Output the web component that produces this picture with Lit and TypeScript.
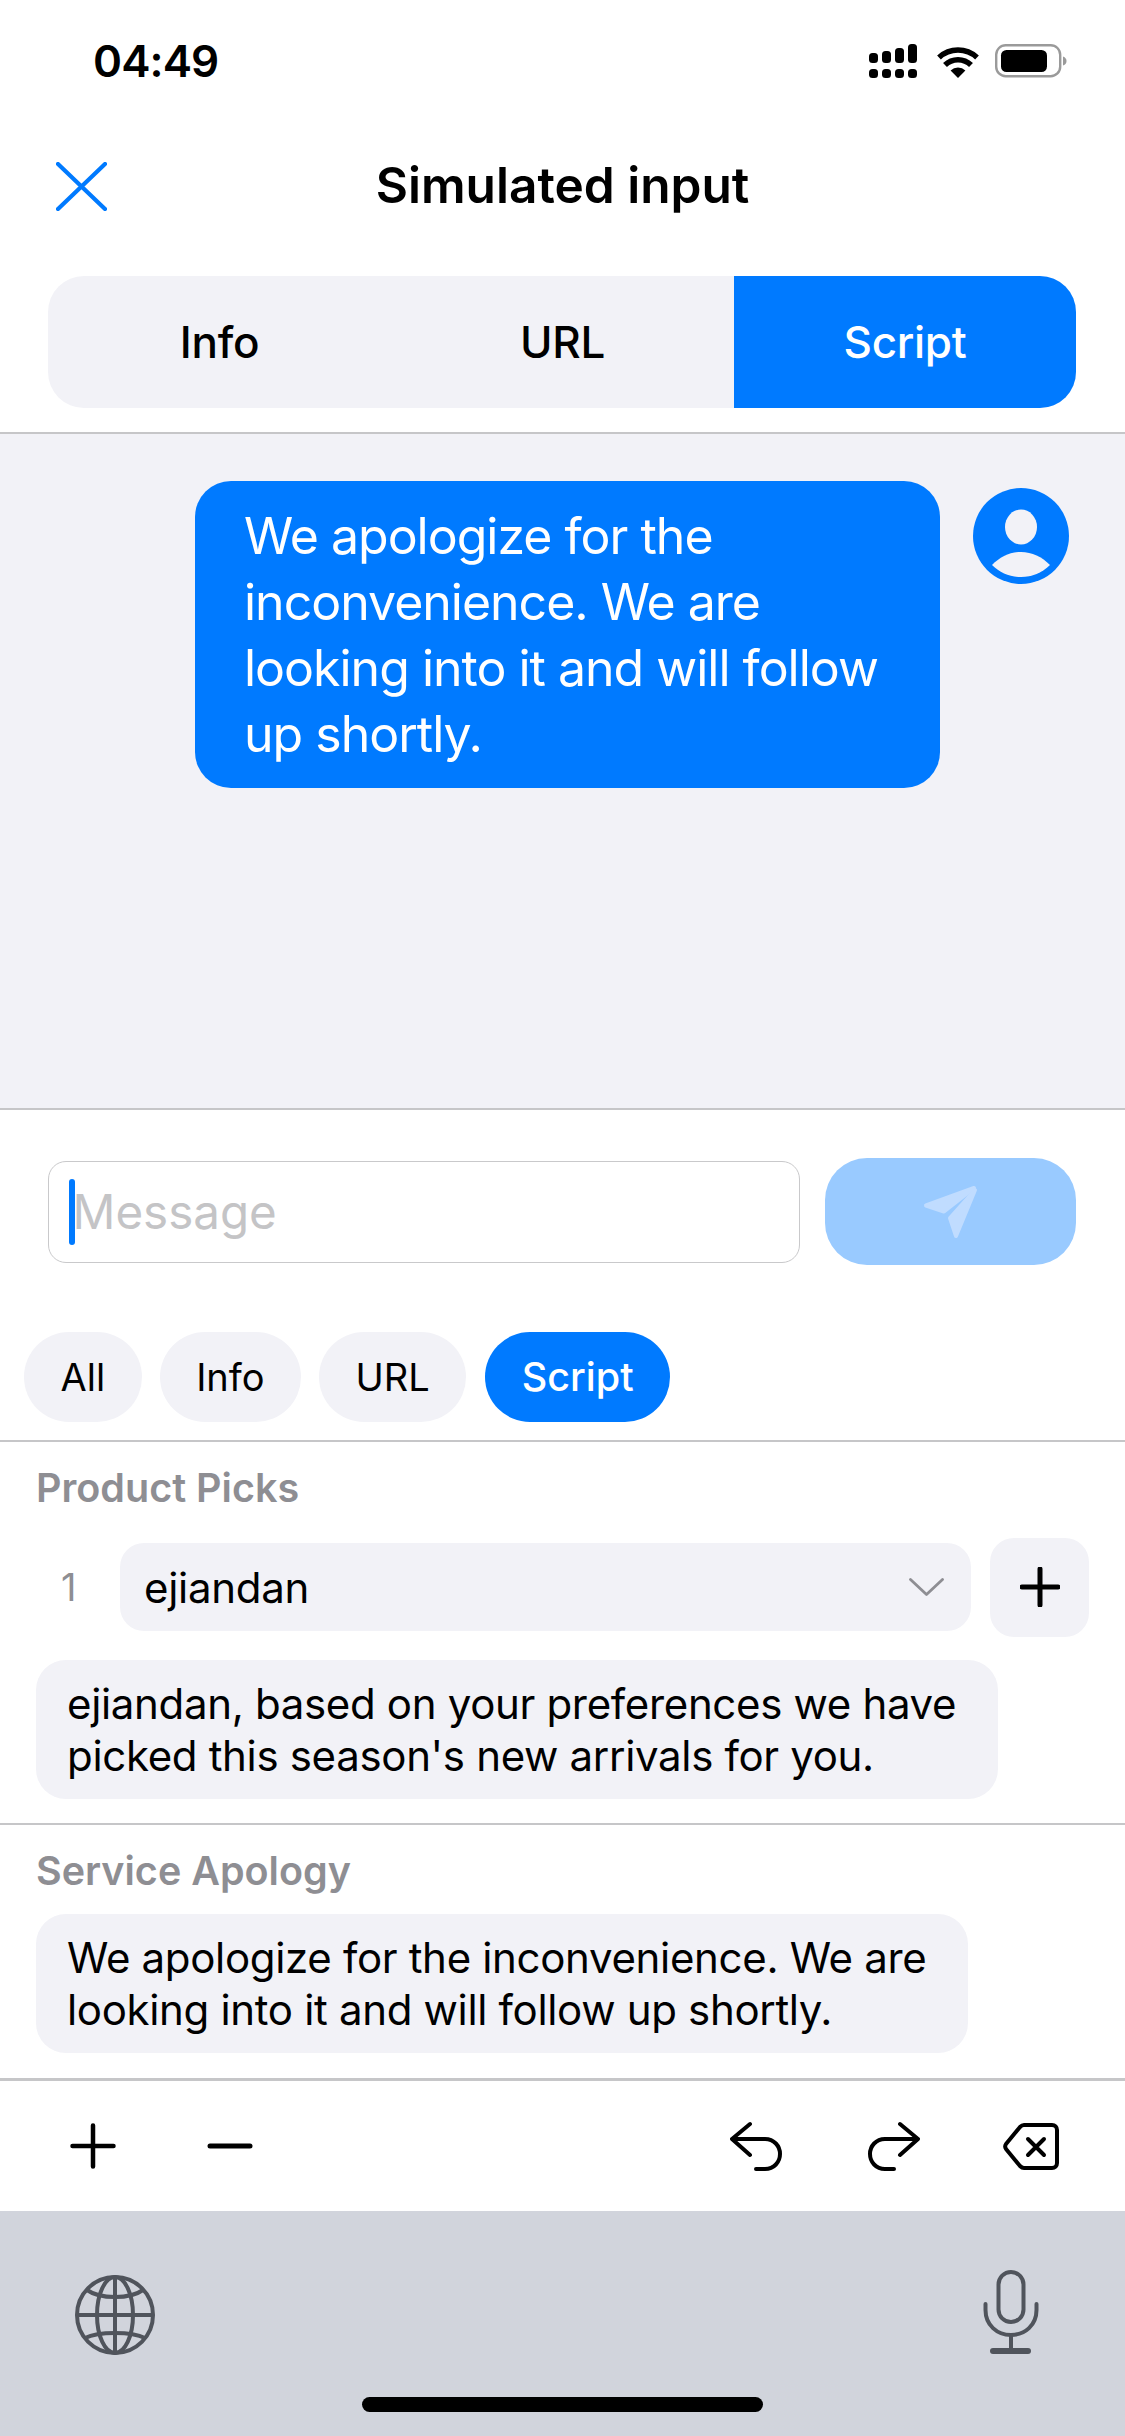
import {LitElement, html, css, svg} from 'lit';
import {customElement} from 'lit/decorators.js';

const signalIcon = svg`<svg class="signal" width="52" height="34" viewBox="0 0 52 34">
  <g fill="#000">
    <rect x="0" y="9" width="9" height="10" rx="3.5"/><rect x="13" y="7" width="9" height="12" rx="3.5"/>
    <rect x="26" y="4" width="9" height="15" rx="3.5"/><rect x="39" y="0" width="9" height="19" rx="3.5"/>
    <rect x="0" y="25" width="9" height="9" rx="3.5"/><rect x="13" y="25" width="9" height="9" rx="3.5"/>
    <rect x="26" y="25" width="9" height="9" rx="3.5"/><rect x="39" y="25" width="9" height="9" rx="3.5"/>
  </g></svg>`;

const wifiIcon = svg`<svg width="42" height="33" viewBox="0 0 42 33">
  <path d="M21 33L13.6 25.6A10.5 10.5 0 0 1 28.4 25.6Z" fill="#000"/>
  <path d="M8 20A18.5 18.5 0 0 1 34 20" fill="none" stroke="#000" stroke-width="5.5"/>
  <path d="M2 12.5A28 28 0 0 1 40 12.5" fill="none" stroke="#000" stroke-width="5.5"/>
</svg>`;

const batteryIcon = svg`<svg width="72" height="34" viewBox="0 0 72 34">
  <rect x="1.2" y="1.2" width="64" height="31" rx="9.5" fill="none" stroke="#9a9a9a" stroke-width="2.4"/>
  <rect x="6" y="6" width="46" height="22" rx="5.5" fill="#000"/>
  <path d="M68 12.5C70.5 13.5 71.5 15 71.5 17C71.5 19 70.5 20.5 68 21.5Z" fill="#9a9a9a"/>
</svg>`;

const closeIcon = svg`<svg width="51" height="49" viewBox="0 0 51 49">
  <path d="M2 2L49 47M49 2L2 47" fill="none" stroke="#007aff" stroke-width="4.2" stroke-linecap="round"/>
</svg>`;

const avatarIcon = svg`<svg width="96" height="96" viewBox="0 0 96 96">
  <circle cx="48" cy="48" r="48" fill="#007aff"/>
  <ellipse cx="48" cy="39" rx="16" ry="17.5" fill="#f2f2f7"/>
  <path d="M19 77C27 69 37 64 48 64C59 64 69 69 77 77C69 85 59 89 48 89C37 89 27 85 19 77Z" fill="#f2f2f7"/>
</svg>`;

const sendIcon = svg`<svg width="60" height="58" viewBox="0 0 60 58">
  <g fill="#c0dcff" stroke="#c0dcff" stroke-width="4" stroke-linejoin="round">
    <path d="M53 5L5 22.5L23 28.5Z"/>
    <path d="M54 7L29 35L35 53Z"/>
  </g></svg>`;

const chevronIcon = svg`<svg width="35" height="18" viewBox="0 0 35 18">
  <path d="M1.5 1.5L17.5 16.5L33.5 1.5" fill="none" stroke="#8e8e93" stroke-width="2.8" stroke-linecap="round" stroke-linejoin="round"/>
</svg>`;

const smallPlus = svg`<svg width="40" height="40" viewBox="0 0 40 40">
  <path d="M20 2V38M2 20H38" fill="none" stroke="#000" stroke-width="5" stroke-linecap="round"/>
</svg>`;

const toolPlus = svg`<svg width="46" height="46" viewBox="0 0 46 46">
  <path d="M23 2.500V43.5M2.500 23H43.5" fill="none" stroke="#000" stroke-width="4.5" stroke-linecap="round"/>
</svg>`;

const toolMinus = svg`<svg width="46" height="46" viewBox="0 0 46 46">
  <path d="M3 23H43" fill="none" stroke="#000" stroke-width="5" stroke-linecap="round"/>
</svg>`;

const undoIcon = svg`<svg width="57" height="50" viewBox="0 0 57 50">
  <path d="M20 3L2 18L20 34M2 18H35C44 18 50 25 50 33C50 41 44 48 35 48H26" fill="none" stroke="#000" stroke-width="4" stroke-linecap="round" stroke-linejoin="round"/>
</svg>`;

const redoIcon = svg`<svg width="52" height="50" viewBox="0 0 52 50">
  <path d="M32 3L50 18L32 34M50 18H17C8 18 2 25 2 33C2 41 8 48 17 48H26" fill="none" stroke="#000" stroke-width="4" stroke-linecap="round" stroke-linejoin="round"/>
</svg>`;

const deleteIcon = svg`<svg width="60" height="50" viewBox="0 0 60 50">
  <path d="M23 4H51C54 4 56 6 56 9V42C56 45 54 47 51 47H23C21 47 20 46 19 45L5 28C4 26.5 4 24.5 5 23L19 6C20 5 21 4 23 4Z" fill="none" stroke="#000" stroke-width="4" stroke-linejoin="round"/>
  <path d="M27 18L43 34M43 18L27 34" fill="none" stroke="#000" stroke-width="4" stroke-linecap="round"/>
</svg>`;

const globeIcon = svg`<svg class="globe" width="80" height="80" viewBox="0 0 80 80">
  <g fill="none" stroke="#50545c" stroke-width="4">
    <circle cx="40" cy="40" r="38"/>
    <ellipse cx="40" cy="40" rx="18" ry="38"/>
    <path d="M40 2V78M2 40H78"/>
    <path d="M12 15C19 20 30 22 40 22C50 22 61 20 68 15"/>
    <path d="M10 63C18 59 30 58 40 58C50 58 62 59 70 63"/>
  </g></svg>`;

const micIcon = svg`<svg width="60" height="86" viewBox="0 0 60 86">
  <g fill="none" stroke="#50545c" stroke-width="4" stroke-linecap="round">
    <rect x="17.5" y="2" width="25" height="50" rx="12.5"/>
    <path d="M4.5 34V40C4.5 55 16 65 30 65C44 65 55.5 55 55.5 40V34"/>
    <path d="M30 65V80"/>
  </g>
  <rect x="9" y="78" width="41" height="6" rx="3" fill="#50545c"/>
</svg>`;

@customElement('app-root')
export class AppRoot extends LitElement {
  static override styles = css`
    :host {
      display: flex;
      flex-direction: column;
      width: 1125px;
      height: 2436px;
      background: #fff;
      color: #000;
      font-family: Inter, 'Liberation Sans', sans-serif;
      overflow: hidden;
    }
    svg {
      display: block;
      flex: none;
    }
    .status {
      height: 122px;
      flex: none;
      display: flex;
      align-items: center;
      justify-content: space-between;
      padding: 0 58px 0 93px;
    }
    .time {
      font-size: 44px;
      font-weight: 600;
      line-height: 1;
      letter-spacing: -0.9px;
    }
    .status-icons {
      display: flex;
      align-items: center;
      gap: 16px;
    }
    .nav {
      height: 126px;
      flex: none;
      display: flex;
      align-items: center;
      justify-content: center;
      position: relative;
      font-size: 49.6px;
      font-weight: 600;
    }
    .close {
      position: absolute;
      left: 56px;
      top: 40px;
    }
    .seg-wrap {
      flex: none;
      padding: 28px 49px 24px 48px;
      border-bottom: 2px solid #c6c6c8;
    }
    .seg {
      display: grid;
      grid-template-columns: 343px 343px 342px;
      height: 132px;
      background: #f2f2f7;
      border-radius: 36px;
      overflow: hidden;
      font-size: 44px;
      font-weight: 500;
      letter-spacing: -0.3px;
    }
    .seg div {
      display: flex;
      align-items: center;
      justify-content: center;
    }
    .seg .on {
      background: #007aff;
      color: #fff;
    }
    .chat {
      flex: none;
      height: 676px;
      box-sizing: border-box;
      background: #f2f2f7;
      border-bottom: 2px solid #c6c6c8;
      padding: 47px 56px 0 0;
      display: flex;
      justify-content: flex-end;
      align-items: flex-start;
      gap: 33px;
    }
    .bubble {
      width: 745px;
      box-sizing: border-box;
      padding: 22px 40px 21px 49px;
      background: #007aff;
      color: #fff;
      border-radius: 36px;
      font-size: 50px;
      line-height: 66px;
      letter-spacing: -1px;
    }
    .avatar {
      margin-top: 7px;
    }
    .compose {
      flex: none;
      height: 222px;
      box-sizing: border-box;
      display: flex;
      align-items: center;
      gap: 25px;
      padding: 0 49px 19px 48px;
    }
    .input {
      flex: 1;
      height: 102px;
      box-sizing: border-box;
      border: 1.5px solid #c9c9cb;
      border-radius: 18px;
      display: flex;
      align-items: center;
      padding-left: 19.5px;
      font-size: 47.5px;
      color: #c4c4c6;
    }
    .caret {
      width: 6px;
      height: 66px;
      border-radius: 3px;
      background: #007aff;
      flex: none;
      margin-right: -2px;
    }
    .send {
      width: 251px;
      height: 107px;
      flex: none;
      border-radius: 42px;
      background: #99caff;
      display: flex;
      align-items: center;
      justify-content: center;
    }
    .chips {
      flex: none;
      display: flex;
      gap: 18px;
      padding: 0 24px 18px;
      border-bottom: 2px solid #c6c6c8;
    }
    .chip {
      height: 90px;
      box-sizing: border-box;
      padding: 0 36.5px;
      display: flex;
      align-items: center;
      border-radius: 45px;
      background: #f2f2f7;
      font-size: 38px;
      font-weight: 400;
    }
    .chip.on {
      background: #007aff;
      color: #fff;
      font-size: 39.5px;
      font-weight: 500;
      margin-left: 1px;
    }
    .group {
      flex: none;
      box-sizing: border-box;
      padding: 0 36px;
      border-bottom: 2px solid #c6c6c8;
    }
    .group-first {
      height: 383px;
    }
    .group-second {
      height: 256px;
      border-bottom-width: 3px;
    }
    .group-title {
      height: 60px;
      padding-top: 16px;
      display: flex;
      align-items: center;
      font-size: 39.5px;
      font-weight: 600;
      color: #8e8e93;
      margin-bottom: 19px;
    }
    .group-second .group-title {
      margin-bottom: 13px;
    }
    .pick {
      display: flex;
      align-items: center;
      gap: 19px;
      height: 100px;
    }
    .num {
      width: 65px;
      flex: none;
      box-sizing: border-box;
      padding-left: 25px;
      font-size: 38px;
      color: #8e8e93;
    }
    .select {
      width: 851px;
      height: 88px;
      box-sizing: border-box;
      border-radius: 24px;
      background: #f2f2f7;
      padding: 0 27px 0 24px;
      display: flex;
      align-items: center;
      justify-content: space-between;
      font-size: 42px;
      letter-spacing: -0.3px;
    }
    .add {
      width: 99px;
      height: 99px;
      flex: none;
      border-radius: 24px;
      background: #f2f2f7;
      display: flex;
      align-items: center;
      justify-content: center;
    }
    .script {
      width: fit-content;
      box-sizing: border-box;
      padding: 17.5px 42px 17.5px 31px;
      border-radius: 30px;
      background: #f2f2f7;
      font-size: 42px;
      line-height: 52px;
      letter-spacing: -0.33px;
    }
    .pick + .script {
      margin-top: 23px;
    }
    .toolbar {
      flex: none;
      height: 130px;
      display: flex;
      align-items: center;
      padding: 0 64px 0 70px;
    }
    .tool-left {
      display: flex;
      gap: 91px;
      flex: 1;
    }
    .tool-right {
      display: flex;
      align-items: center;
      gap: 81px;
    }
    .keyboard {
      flex: 1;
      background: #d1d4dc;
      display: flex;
      flex-direction: column;
    }
    .kb-keys {
      display: flex;
      justify-content: space-between;
      align-items: flex-start;
      padding: 59px 84px 0 75px;
    }
    .globe {
      margin-top: 5px;
    }
    .home {
      width: 401px;
      height: 15px;
      border-radius: 8px;
      background: #000;
      align-self: center;
      margin-top: 41px;
    }
  `;

  private _group(title: string, body: unknown, cls: string) {
    return html`<section class="group ${cls}">
      <div class="group-title">${title}</div>
      ${body}
    </section>`;
  }

  override render() {
    return html`
      <div class="status">
        <div class="time">04:49</div>
        <div class="status-icons">${signalIcon}${wifiIcon}${batteryIcon}</div>
      </div>
      <div class="nav">
        <div class="close">${closeIcon}</div>
        Simulated input
      </div>
      <div class="seg-wrap">
        <div class="seg">
          <div>Info</div>
          <div>URL</div>
          <div class="on">Script</div>
        </div>
      </div>
      <div class="chat">
        <div class="bubble">We apologize for the inconvenience. We are looking into it and will follow up shortly.</div>
        <div class="avatar">${avatarIcon}</div>
      </div>
      <div class="compose">
        <div class="input"><span class="caret"></span>Message</div>
        <div class="send">${sendIcon}</div>
      </div>
      <div class="chips">
        <div class="chip">All</div>
        <div class="chip">Info</div>
        <div class="chip">URL</div>
        <div class="chip on">Script</div>
      </div>
      ${this._group(
        'Product Picks',
        html`<div class="pick">
            <div class="num">1</div>
            <div class="select">ejiandan ${chevronIcon}</div>
            <div class="add">${smallPlus}</div>
          </div>
          <div class="script">ejiandan, based on your preferences we have<br />picked this season's new arrivals for you.</div>`,
        'group-first'
      )}
      ${this._group(
        'Service Apology',
        html`<div class="script">We apologize for the inconvenience. We are<br />looking into it and will follow up shortly.</div>`,
        'group-second'
      )}
      <div class="toolbar">
        <div class="tool-left">${toolPlus}${toolMinus}</div>
        <div class="tool-right">${undoIcon}${redoIcon}${deleteIcon}</div>
      </div>
      <div class="keyboard">
        <div class="kb-keys">${globeIcon}${micIcon}</div>
        <div class="home"></div>
      </div>
    `;
  }
}
